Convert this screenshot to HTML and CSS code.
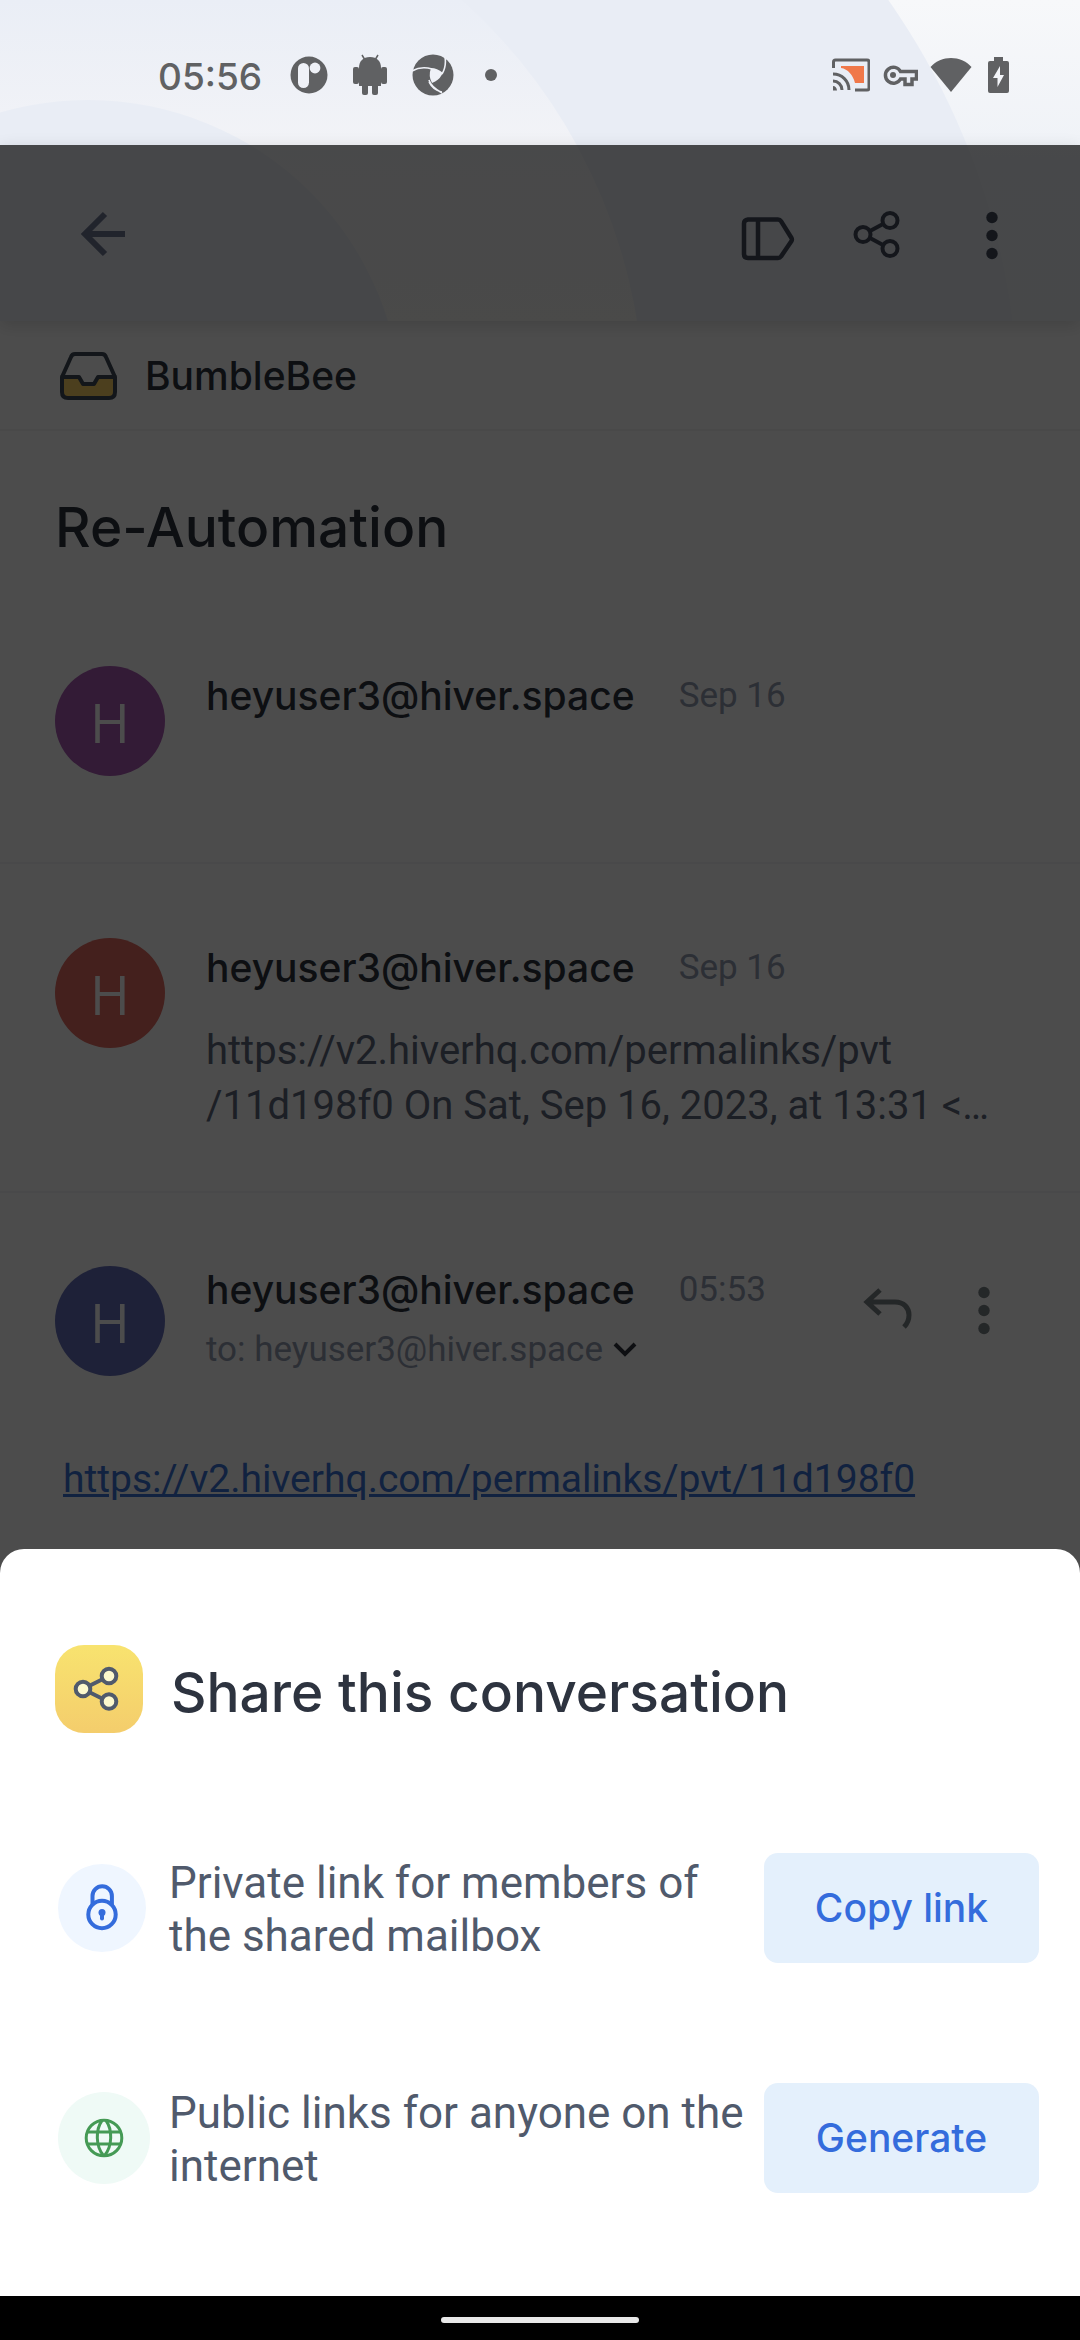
FILE: index.html
```html
<!DOCTYPE html>
<html lang="en">
<head>
<meta charset="utf-8">
<meta name="viewport" content="width=device-width, initial-scale=1">
<title>Re-Automation</title>
<link rel="stylesheet" href="styles.css">
</head>
<body>
<svg class="backdrop" viewBox="0 0 1080 321" preserveAspectRatio="xMinYMin slice" aria-hidden="true">
  <defs>
    <linearGradient id="sky" x1="0" y1="0" x2="0" y2="1"><stop offset="0" stop-color="#f7f8fa"/><stop offset=".5" stop-color="#eff2f7"/><stop offset="1" stop-color="#eef1f6"/></linearGradient>
    <linearGradient id="band" x1="0" y1="0" x2="0" y2="321" gradientUnits="userSpaceOnUse"><stop offset="0" stop-color="#eaeef6"/><stop offset=".45" stop-color="#f2f3f7"/><stop offset="1" stop-color="#f7f7f6"/></linearGradient>
  </defs>
  <rect width="1080" height="321" fill="url(#sky)"/>
  <circle cx="305" cy="410" r="713" fill="#e9edf5"/>
  <circle cx="96" cy="408" r="548" fill="url(#band)"/>
  <circle cx="88" cy="414" r="314" fill="#e9edf5"/>
</svg>

<header class="status">
  <time class="status-time">05:56</time>
  <div class="status-left">
    <svg width="38" height="40" viewBox="0 0 38 40"><circle cx="19" cy="20" r="18.5" fill="#606163"/><rect x="8" y="8" width="11" height="25" rx="5.5" fill="#eff1f7"/><circle cx="25" cy="13" r="5.4" fill="#eff1f7"/></svg>
    <svg width="36" height="42" viewBox="0 0 36 42" fill="#606163"><path d="M7 14C7 7 11 3 18 3s11 4 11 11v18H7z"/><rect x="1" y="13" width="6" height="17" rx="2"/><rect x="29" y="13" width="6" height="17" rx="2"/><rect x="10" y="28" width="6" height="13" rx="2"/><rect x="20" y="28" width="6" height="13" rx="2"/><path d="M10 1l3 5M26 1l-3 5" stroke="#606163" stroke-width="1.5"/></svg>
    <svg width="42" height="42" viewBox="0 0 42 42"><circle cx="21" cy="21" r="20.5" fill="#606163"/><path d="M19 14q6 0 12 5l-2 3q-2 4-9 7-4-7-1-15z" fill="#eff1f7"/><path d="M33 3c1 6 0 12-3 17M0 17c7-4 13-4 20-2M17 26c1 4 4 8 13 13M30 38c-6-1-10-4-13-10" fill="none" stroke="#eff1f7" stroke-width="1.6"/></svg>
    <svg width="24" height="24" viewBox="0 0 24 24"><circle cx="13" cy="12" r="6" fill="#606163"/></svg>
  </div>
  <div class="status-right">
    <svg width="40" height="36" viewBox="0 0 40 36" fill="none" stroke="#606163" stroke-width="3"><path d="M11 9h23v17H25C23 18 18 12 11 11z" fill="#f0784a" stroke="none"/><path d="M3.500 11V5q0-2 2-2H37q2 0 2 2v26q0 2-2 2H25"/><path d="M3 17c9 0 16 7 16 16M3 24c5 0 9 4 9 9"/><path d="M3 29c2 0 4 2 4 4.500H3z" fill="#606163" stroke="none"/></svg>
    <svg width="36" height="36" viewBox="0 0 36 36" fill="none" stroke="#606163" stroke-width="3.500"><path d="M18.500 14.500A8 8 0 1 0 18.500 22H23v5.500h7V22h4.500v-7.500z"/><circle cx="11" cy="18" r="3" fill="#606163" stroke="none"/></svg>
    <svg width="42" height="36" viewBox="0 0 42 36"><path d="M.5 10C11-2 31-2 41.500 10L21 35z" fill="#606163"/></svg>
    <svg width="28" height="38" viewBox="0 0 28 38"><path d="M10 1h9v4h4q2 0 2 2v28q0 2-2 2H6q-2 0-2-2V7q0-2 2-2h4z" fill="#606163"/><path d="M16 10L9 22h4.500v9L20 19h-4z" fill="#f3f5f9"/></svg>
  </div>
</header>

<div class="app">
  <nav class="appbar">
    <button class="icon-btn back" aria-label="Back"><svg width="64" height="64" viewBox="0 0 64 64" fill="none" stroke="#717a94" stroke-width="6"><path d="M34 12L14 32l20 20M13 32h41"/></svg></button>
    <button class="icon-btn" aria-label="Label"><svg width="64" height="64" viewBox="0 0 64 64" fill="none" stroke="#434c5c" stroke-width="4.500" stroke-linejoin="round"><path d="M12 17.500h30q2 0 3 1.600L55.500 36q.8 1.500 0 3L45 54.400q-1 1.600-3 1.600H12q-4 0-4-4V21.500q0-3.500 4-4zM22 18v38"/></svg></button>
    <button class="icon-btn" aria-label="Share"><svg width="64" height="64" viewBox="0 0 64 64" fill="none" stroke="#434c5c" stroke-width="4"><circle cx="15" cy="32.500" r="7.500"/><circle cx="42" cy="18.500" r="7.500"/><circle cx="42" cy="46.500" r="7.500"/><path d="M22 29l13-7M22 36l13 7"/></svg></button>
    <button class="icon-btn" aria-label="More options"><svg width="64" height="64" viewBox="0 0 64 64" fill="#434c5c"><circle cx="32" cy="15.500" r="5.700"/><circle cx="32" cy="33.500" r="5.700"/><circle cx="32" cy="51.500" r="5.700"/></svg></button>
  </nav>

  <div class="mailbox">
    <svg width="60" height="50" viewBox="0 0 60 50" fill="none" stroke="#414c58" stroke-width="4" stroke-linejoin="round"><path d="M4 26h17l4 7h11l4-7h17v15q0 6-6 6H10q-6 0-6-6z" fill="#ffd266"/><path d="M4 26L13 6q1-3 4-3h27q3 0 4 3l9 20"/></svg>
    <span>BumbleBee</span>
  </div>

  <main class="thread">
    <h1 class="subject">Re-Automation</h1>

    <article class="message">
      <div class="avatar purple">H</div>
      <div class="message-body">
        <div class="line"><span class="sender">heyuser3@hiver.space</span><time class="date">Sep 16</time></div>
      </div>
    </article>

    <article class="message">
      <div class="avatar red">H</div>
      <div class="message-body">
        <div class="line"><span class="sender">heyuser3@hiver.space</span><time class="date">Sep 16</time></div>
        <p class="snippet">https://v2.hiverhq.com/permalinks/pvt<br>/11d198f0 On Sat, Sep 16, 2023, at 13:31 &lt;…</p>
      </div>
    </article>

    <article class="message open">
      <div class="avatar blue">H</div>
      <div class="message-body">
        <div class="line"><span class="sender">heyuser3@hiver.space</span><time class="date">05:53</time></div>
        <button class="recipients">to: heyuser3@hiver.space<svg width="24" height="16" viewBox="0 0 24 16" fill="none" stroke="#31343c" stroke-width="4"><path d="M2 2l10 10L22 2"/></svg></button>
      </div>
      <div class="actions">
        <button class="icon-btn" aria-label="Reply"><svg width="64" height="64" viewBox="0 0 64 64" fill="none" stroke="#7b8285" stroke-width="5"><path d="M24 12L11 24l13 12M10 24h29c9 0 14 6 14 13 0 5-2 9-5 12"/></svg></button>
        <button class="icon-btn" aria-label="Message options"><svg width="64" height="64" viewBox="0 0 64 64" fill="#7b8285"><circle cx="32" cy="14.500" r="5.700"/><circle cx="32" cy="32.500" r="5.700"/><circle cx="32" cy="50.500" r="5.700"/></svg></button>
      </div>
    </article>
    <p class="content"><a href="https://v2.hiverhq.com/permalinks/pvt/11d198f0">https://v2.hiverhq.com/permalinks/pvt/11d198f0</a></p>
  </main>

  <div class="scrim"></div>

  <section class="sheet" role="dialog" aria-labelledby="sheet-title">
    <header class="sheet-head">
      <svg class="sheet-icon" width="88" height="88" viewBox="0 0 88 88"><defs><linearGradient id="gold" x1="0" y1="0" x2="0" y2="1"><stop offset="0" stop-color="#f8e36f"/><stop offset="1" stop-color="#f4cd6c"/></linearGradient></defs><rect width="88" height="88" rx="29" fill="url(#gold)"/><g fill="#fcf8cd" stroke="#505a6c" stroke-width="4"><path d="M34 41l14-7M34 47l14 7"/><circle cx="28" cy="44" r="7.300"/><circle cx="54" cy="31" r="7.300"/><circle cx="54" cy="56.500" r="7.300"/></g></svg>
      <h2 id="sheet-title">Share this conversation</h2>
    </header>
    <div class="option">
      <svg class="option-icon" width="92" height="92" viewBox="0 0 92 92" fill="none" stroke="#346cdc" stroke-width="4"><circle cx="44" cy="46" r="44" fill="#eff6ff" stroke="none"/><path d="M34.500 43V34a9.700 9.700 0 0 1 19.400 0v9"/><circle cx="44" cy="52.500" r="13.700"/><circle cx="44" cy="50.500" r="3.500" fill="#346cdc" stroke="none"/><path d="M44 50v6.500" stroke-linecap="round"/></svg>
      <p>Private link for members of the shared mailbox</p>
      <button class="action">Copy link</button>
    </div>
    <div class="option">
      <svg class="option-icon" width="92" height="92" viewBox="0 0 92 92" fill="none" stroke="#459a55" stroke-width="3"><circle cx="46" cy="46" r="46" fill="#effaf6" stroke="none"/><circle cx="46" cy="46" r="17.800"/><path d="M29 40h34M29 52h34M44 28.500c-6.500 9-6.500 26 1.500 35M48 28.500c6.500 9 6.500 26-1.500 35"/></svg>
      <p>Public links for anyone on the internet</p>
      <button class="action">Generate</button>
    </div>
  </section>
</div>

<footer class="navbar"><span class="pill"></span></footer>
</body>
</html>
```
FILE: styles.css
```css
* {
  box-sizing: border-box;
  margin: 0;
  padding: 0;
}

body {
  position: relative;
  isolation: isolate;
  display: flex;
  flex-direction: column;
  min-height: 100vh;
  background: #fff;
  color: #2d333f;
  font-family: Roboto, "Noto Sans", sans-serif;
}

button {
  border: 0;
  background: none;
  color: inherit;
  font: inherit;
}

svg {
  display: block;
  flex: none;
}

.backdrop {
  position: absolute;
  top: 0;
  left: 0;
  z-index: -1;
  width: 100%;
  height: 321px;
}

/* System status bar */
.status {
  display: flex;
  align-items: center;
  height: 145px;
  padding: 5px 68px 0 158px;
  color: #606163;
}

.status-time {
  padding-top: 4px;
  font: 500 37px/44px Inter, sans-serif;
}

.status-left {
  display: flex;
  align-items: center;
  gap: 24px;
  margin-left: 28px;
}

.status-right {
  display: flex;
  align-items: center;
  gap: 12px;
  margin-left: auto;
}

/* Conversation screen */
.app {
  position: relative;
  flex: 1;
}

.appbar {
  position: relative;
  display: flex;
  align-items: center;
  gap: 48px;
  height: 176px;
  padding: 2px 56px 0 71px;
  box-shadow: 0 4px 16px rgba(0, 0, 0, .14);
}

.back {
  margin-right: auto;
}

.icon-btn {
  width: 64px;
  height: 64px;
}

.mailbox {
  display: flex;
  align-items: center;
  gap: 27px;
  height: 110px;
  padding: 2px 58px 0;
  border-bottom: 2px solid #f6f6f6;
  font: 500 39px/48px Inter, sans-serif;
}

.thread {
  display: flex;
  flex-direction: column;
}

.subject {
  padding: 64px 55px 33px;
  font: 500 55px/64px Inter, sans-serif;
}

.message {
  display: flex;
  gap: 41px;
  min-height: 272px;
  padding: 74px 55px 58px;
  border-bottom: 2px solid #f3f3f9;
}

.message.open {
  min-height: 0;
  padding: 73px 64px 0 55px;
  border-bottom: 0;
}

.avatar {
  flex: none;
  width: 110px;
  height: 110px;
  border-radius: 50%;
  color: #fff;
  font: 400 54px/112px "Open Sans", sans-serif;
  text-align: center;
}

.purple { background: #ab5ab5; }
.red { background: #e36b61; }
.blue { background: #6771bb; }

.message-body {
  flex: 1;
  padding-top: 6px;
}

.open .message-body {
  padding-top: 0;
}

.line {
  display: flex;
  align-items: center;
  gap: 44px;
}

.sender {
  font: 500 39px/48px Inter, sans-serif;
}

.date,
.recipients {
  color: #949db3;
  font-size: 35px;
  line-height: 44px;
}

.snippet {
  margin-top: 31px;
  color: #5e687e;
  font-size: 40px;
  line-height: 55px;
  white-space: nowrap;
}

.recipients {
  display: flex;
  align-items: center;
  gap: 10px;
  margin-top: 14px;
}

.actions {
  display: flex;
  gap: 32px;
  margin-top: 12px;
}

.content {
  padding: 76px 63px;
  font-size: 39px;
  line-height: 55px;
}

.content a {
  color: #3b72d6;
}

.scrim {
  position: absolute;
  inset: 0;
  background: rgba(0, 0, 0, .7);
}

/* Share sheet */
.sheet {
  position: absolute;
  inset: auto 0 0;
  display: flex;
  flex-direction: column;
  gap: 120px;
  padding: 96px 41px 103px 55px;
  border-radius: 24px 24px 0 0;
  background: #fff;
}

.sheet-head {
  display: flex;
  align-items: center;
  gap: 28px;
}

.sheet-head h2 {
  padding-top: 6px;
  font: 500 55px/64px Inter, sans-serif;
}

.option {
  display: flex;
  align-items: center;
  padding-left: 3px;
}

.option p {
  flex: 1;
  margin-left: 19px;
  padding-top: 4px;
  color: #505a6c;
  font-size: 44px;
  line-height: 53px;
}

.action {
  flex: none;
  width: 275px;
  height: 110px;
  border-radius: 14px;
  background: #e4f0fc;
  color: #346cdc;
  font: 500 39px/48px Inter, sans-serif;
}

/* System gesture bar */
.navbar {
  display: flex;
  align-items: center;
  justify-content: center;
  height: 44px;
  padding-top: 4px;
  background: #000;
}

.pill {
  width: 198px;
  height: 6px;
  border-radius: 3px;
  background: #e8e8e8;
}
```
